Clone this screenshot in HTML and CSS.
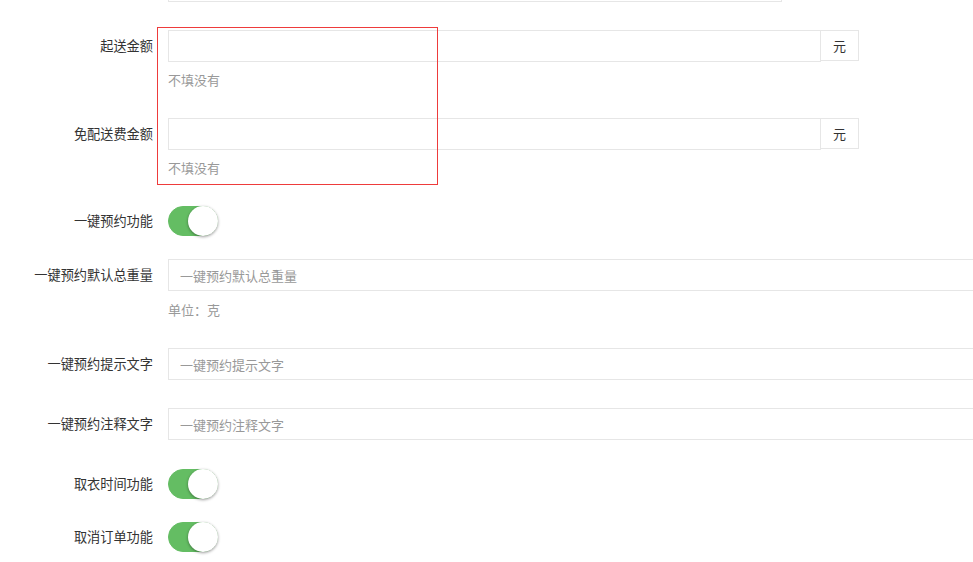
FILE: index.html
```html
<!DOCTYPE html>
<html lang="zh-CN">
<head>
    <meta charset="UTF-8">
    <title>配送设置</title>
    <meta name="viewport" content="width=device-width, initial-scale=1">
    <link rel="stylesheet" href="styles.css">
</head>
<body>
    <div class="form">
        <div class="form-group">
            <label class="form-label"></label>
            <div class="form-field">
                <div class="input-group">
                    <input class="form-input" type="text">
                    <span class="input-addon wide"></span>
                </div>
            </div>
        </div>

        <div class="form-group">
            <label class="form-label">起送金额</label>
            <div class="form-field">
                <div class="input-group">
                    <input class="form-input" type="text">
                    <span class="input-addon">元</span>
                </div>
                <p class="help-text">不填没有</p>
            </div>
        </div>

        <div class="form-group">
            <label class="form-label">免配送费金额</label>
            <div class="form-field">
                <div class="input-group">
                    <input class="form-input" type="text">
                    <span class="input-addon">元</span>
                </div>
                <p class="help-text">不填没有</p>
            </div>
        </div>

        <div class="form-group switch-row">
            <label class="form-label">一键预约功能</label>
            <div class="form-field">
                <span class="switch is-on"><span class="switch-knob"></span></span>
            </div>
        </div>

        <div class="form-group">
            <label class="form-label">一键预约默认总重量</label>
            <div class="form-field">
                <input class="form-input full" type="text" placeholder="一键预约默认总重量">
                <p class="help-text unit">单位：克</p>
            </div>
        </div>

        <div class="form-group">
            <label class="form-label">一键预约提示文字</label>
            <div class="form-field">
                <input class="form-input full" type="text" placeholder="一键预约提示文字">
            </div>
        </div>

        <div class="form-group">
            <label class="form-label">一键预约注释文字</label>
            <div class="form-field">
                <input class="form-input full" type="text" placeholder="一键预约注释文字">
            </div>
        </div>

        <div class="form-group switch-row spaced">
            <label class="form-label">取衣时间功能</label>
            <div class="form-field">
                <span class="switch is-on"><span class="switch-knob"></span></span>
            </div>
        </div>

        <div class="form-group switch-row">
            <label class="form-label">取消订单功能</label>
            <div class="form-field">
                <span class="switch is-on"><span class="switch-knob"></span></span>
            </div>
        </div>
    </div>

    <div class="highlight-box"></div>
</body>
</html>
```

FILE: styles.css
```css
body {
    margin: 0;
    font-family: "Noto Sans CJK SC", "Noto Sans", sans-serif;
    font-size: 13px;
    color: #333;
    background-color: #fff;
    overflow: hidden;
    position: relative;
}
.form {
    width: 1020px;
    margin-top: -30px;
}
.form-group {
    display: flex;
    align-items: flex-start;
    margin-bottom: 28px;
}
.form-label {
    width: 168px;
    flex-shrink: 0;
    box-sizing: border-box;
    padding-right: 15px;
    text-align: right;
    line-height: 32px;
    min-height: 32px;
    font-size: 13.2px;
}
.form-field {
    flex-grow: 1;
}
.input-group {
    display: flex;
    width: 691px;
}
.form-input {
    box-sizing: border-box;
    height: 32px;
    border: 1px solid #e6e6e6;
    padding: 0 11px;
    font-family: inherit;
    font-size: 13px;
    color: #333;
    outline: none;
    flex-grow: 1;
    min-width: 0;
}
.form-input::placeholder {
    color: #999;
}
.form-input.full {
    display: block;
    width: 820px;
}
.input-addon {
    box-sizing: border-box;
    width: 38px;
    height: 31px;
    border: 1px solid #e6e6e6;
    border-left: none;
    display: flex;
    align-items: center;
    justify-content: center;
    color: #333;
}
.input-addon.wide {
    width: 77px;
    margin-top: -1px;
}
.help-text {
    margin: 8px 0 0;
    line-height: 20px;
    color: #999;
}
.help-text.unit {
    margin-top: 9px;
}
.switch-row {
    margin-bottom: 23px;
}
.switch-row.spaced {
    padding-top: 1px;
}
.switch-row .form-label {
    line-height: 30px;
    min-height: 30px;
}
.switch {
    display: block;
    position: relative;
    width: 50px;
    height: 30px;
    box-sizing: border-box;
    border-radius: 20px;
    border: 1px solid #dfdfdf;
    background-color: #fff;
}
.switch.is-on {
    background-color: #64bd63;
    border-color: #64bd63;
}
.switch-knob {
    position: absolute;
    top: -1px;
    right: -1px;
    width: 30px;
    height: 30px;
    border-radius: 50%;
    background-color: #fff;
    box-shadow: 0 1px 3px rgba(0, 0, 0, 0.4);
}
.highlight-box {
    position: absolute;
    left: 157px;
    top: 27px;
    width: 281px;
    height: 158px;
    box-sizing: border-box;
    border: 1px solid #ee3b3b;
    pointer-events: none;
}
```
